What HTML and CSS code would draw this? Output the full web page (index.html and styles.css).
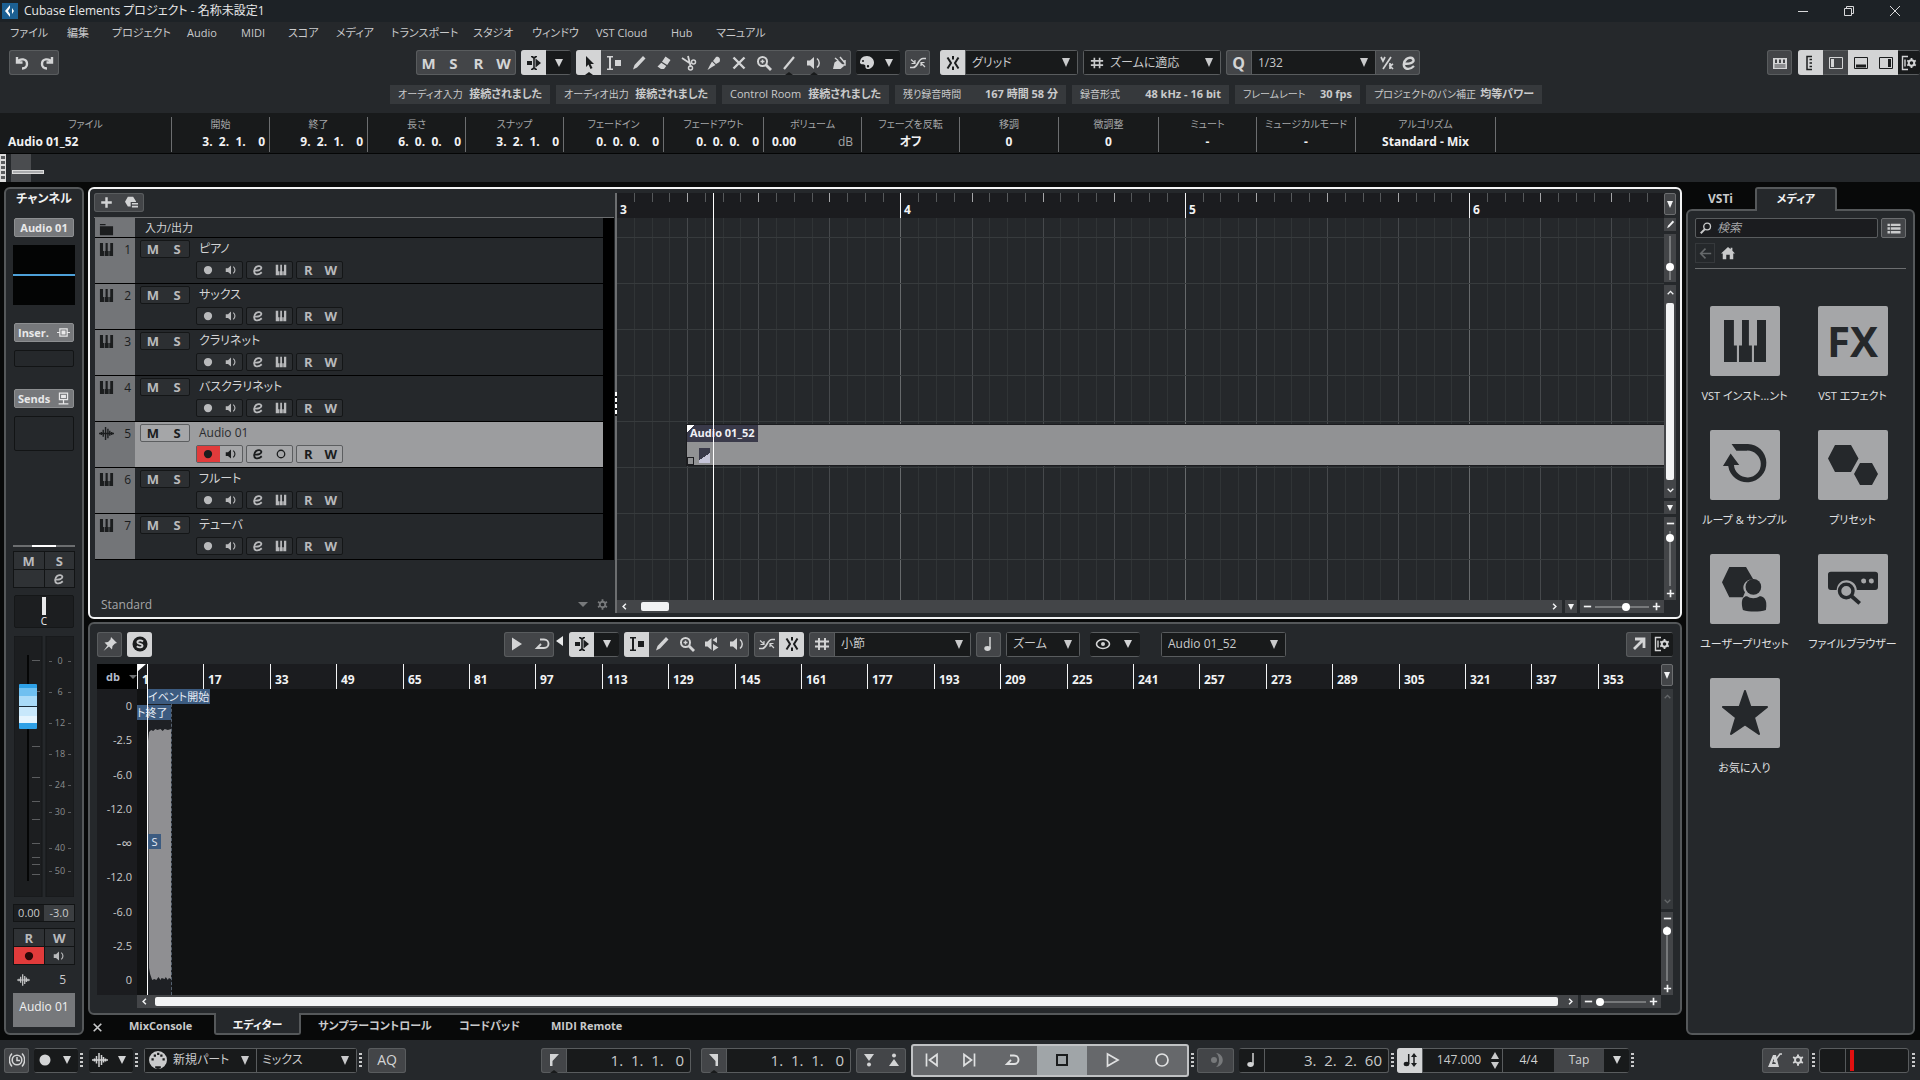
FILE: index.html
```
<!DOCTYPE html>
<html lang="ja">
<head>
  <meta charset="utf-8">
  <title>Cubase Elements プロジェクト - 名称未設定1</title>
  <link rel="stylesheet" href="styles.css">
</head>
<body>

  <!-- icon sprite -->
  <svg class="sprite" aria-hidden="true">
    <symbol id="undo" viewBox="0 0 16 16"><path d="M3 2v5.500h5.500M3.500 7C6 3 13 3.500 13 9c0 3-2 4.500-5 4.500" fill="none" stroke="currentColor" stroke-width="2.400"/></symbol>
    <symbol id="redo" viewBox="0 0 16 16"><path d="M13 2v5.500H7.500M12.500 7C10 3 3 3.500 3 9c0 3 2 4.500 5 4.500" fill="none" stroke="currentColor" stroke-width="2.400"/></symbol>
    <symbol id="scroll" viewBox="0 0 16 16"><path d="M1 6h5v4H1zM9.500 3.500 15 8l-5.500 4.500zM5 1h2l1 1 1-1h2v1L8.800 3.500v9L11 14v1H9l-1-1-1 1H5v-1l2.200-1.500v-9L5 2z"/></symbol>
    <symbol id="arrow" viewBox="0 0 16 16"><path d="M5 1v11l2.500-2.500L9.500 14l2-1-2-4H13z"/></symbol>
    <symbol id="range" viewBox="0 0 16 16"><path d="M1 1h6v1.500H5v11h2V15H1v-1.500h2v-11H1zM9 5h6v6H9z"/></symbol>
    <symbol id="pencil" viewBox="0 0 16 16"><path d="M12 1l2.500 2.500L6 12.500 2 14.500 3.500 10z"/></symbol>
    <symbol id="eraser" viewBox="0 0 16 16"><path d="M9.500 1.500 14.500 5l-3.300 5L6 6.700zM5.300 7.700l5 3.300L8 14H5L1.500 11.500z"/></symbol>
    <symbol id="scissors" viewBox="0 0 16 16"><path d="M1 3l9 6M7 1l2 8 1 3" fill="none" stroke="currentColor" stroke-width="1.800"/><circle cx="12.500" cy="7" r="2" fill="none" stroke="currentColor" stroke-width="1.500"/><circle cx="9.500" cy="13" r="2" fill="none" stroke="currentColor" stroke-width="1.500"/></symbol>
    <symbol id="glue" viewBox="0 0 16 16"><path d="M10 2c3-1 5 2 3.500 5L10 9 7 6zM6 6.500 9.500 10 6 12 1.500 15 4 10z"/></symbol>
    <symbol id="cross" viewBox="0 0 16 16"><path d="M2.500 2.500l11 11M13.500 2.500l-11 11" stroke="currentColor" stroke-width="2.400"/></symbol>
    <symbol id="zoom" viewBox="0 0 16 16"><circle cx="6.500" cy="6.500" r="4.500" fill="none" stroke="currentColor" stroke-width="2"/><path d="M10 10l5 5" stroke="currentColor" stroke-width="2.800"/><path d="M4.500 6.500h4M6.500 4.500v4" stroke="currentColor" stroke-width="1.500"/></symbol>
    <symbol id="line" viewBox="0 0 16 16"><path d="M13 2 3 14" stroke="currentColor" stroke-width="2.200"/></symbol>
    <symbol id="speaker" viewBox="0 0 16 16"><path d="M1 5.500h3L8 2v12l-4-3.500H1z"/><path d="M11 3.500c3 2.500 3 6.500 0 9" fill="none" stroke="currentColor" stroke-width="1.500"/></symbol>
    <symbol id="scrub" viewBox="0 0 16 16"><path d="M1 5.500h2.500L7.500 2v12l-4-3.500H1zM13 1v6L8.500 4zM9 8l5.500 3.500L9 15z"/></symbol>
    <symbol id="bucket" viewBox="0 0 16 16"><path d="M2 14l1.500-6.500L7 5l6 6-3.500 3z"/><path d="M4 3l3 2.500M9 2l5 6M14 5v5H9" stroke="currentColor" stroke-width="1.500" fill="none"/></symbol>
    <symbol id="palette" viewBox="0 0 16 16"><path fill-rule="evenodd" d="M8 1C3 1 1 4 1 8c1 2 4 1 5 2s-.5 3 2 4c4 .5 7-3 7-6.500S12 1 8 1zM4 7a1 1 0 1 1 0-2 1 1 0 0 1 0 2zm5 5.500a1.200 1.200 0 1 1 0-2.400 1.200 1.200 0 0 1 0 2.400z"/></symbol>
    <symbol id="fade" viewBox="0 0 16 16"><path d="M0 12.500h3C8 12.500 8 3.500 13 3.500h3" fill="none" stroke="currentColor" stroke-width="1.700"/><path d="M1 4.500 5 8M5 5v3.500H1.500M15 12l-4-4M11 11V7.500h3.500" fill="none" stroke="currentColor" stroke-width="1.200"/></symbol>
    <symbol id="snap" viewBox="0 0 16 16"><path d="M8 1v3.500M8 11.500V15M2.500 2.500 6 8l-3.500 5.500M13.500 2.500 10 8l3.500 5.500" fill="none" stroke="currentColor" stroke-width="2"/></symbol>
    <symbol id="hash" viewBox="0 0 16 16"><path d="M5 2v12M11 2v12M1 5.500h14M1 10.500h14" stroke="currentColor" stroke-width="1.900"/></symbol>
    <symbol id="swing" viewBox="0 0 16 16"><path d="M12 2 4 14M2 2l2 4 2-4M14 9l-3 2 3 3M11 8v6" fill="none" stroke="currentColor" stroke-width="1.700"/></symbol>
    <symbol id="edit" viewBox="0 0 16 16"><path d="M3 8.500c5 1 10-1 9.500-3.500C12 2.500 8 2 5.500 4 2 7 2 12 5 13.500c3 1 6-.5 8-2.500" fill="none" stroke="currentColor" stroke-width="2.400"/></symbol>
    <symbol id="keys" viewBox="0 0 16 16"><path d="M1 1h3.300v8.500h1V15H1zM7 1h2.300v8.500h1V15H6v-5.500h1zM12 1h3v14h-4V9.500h1z"/></symbol>
    <symbol id="folder" viewBox="0 0 16 16"><path d="M1 2h6v1.500H1zM1 4.500h14V14H1z"/></symbol>
    <symbol id="wave" viewBox="0 0 16 16"><path d="M0 8h16M2.500 6.500v3M4.500 4v7.500M7 1v14M9.500 3v10M11.500 5v5.500M13.500 6.500v3" stroke="currentColor" stroke-width="1.500"/></symbol>
    <symbol id="dot" viewBox="0 0 16 16"><circle cx="8" cy="8" r="5.500"/></symbol>
    <symbol id="ring" viewBox="0 0 16 16"><circle cx="8" cy="8" r="5" fill="none" stroke="currentColor" stroke-width="1.700"/></symbol>
    <symbol id="plus" viewBox="0 0 16 16"><path d="M8 1.500v13M1.500 8h13" stroke="currentColor" stroke-width="3"/></symbol>
    <symbol id="minus" viewBox="0 0 16 16"><path d="M1.500 8h13" stroke="currentColor" stroke-width="3"/></symbol>
    <symbol id="preset" viewBox="0 0 16 16"><path d="M3.500 1h6.500l3.500 5.500v1H7V13H3.500L0 7zM8.500 8.500H16v2H8.500zM8.500 12H16v2H8.500z"/></symbol>
    <symbol id="gear" viewBox="0 0 16 16"><circle cx="8" cy="8" r="4" fill="none" stroke="currentColor" stroke-width="2.600"/><path d="M8 .500v3M8 12.500v3M1.500 4.200l2.600 1.500M11.900 10.300l2.600 1.500M1.500 11.800l2.600-1.500M11.900 5.700l2.600-1.500" stroke="currentColor" stroke-width="2.600"/></symbol>
    <symbol id="setup" viewBox="0 0 16 16"><path d="M7 14.500H1.500v-13H7M4 4.500v7" fill="none" stroke="currentColor" stroke-width="1.400"/><circle cx="10.500" cy="8" r="2.800" fill="none" stroke="currentColor" stroke-width="2"/><path d="M10.500 3v2M10.500 11v2M6.200 5.500l1.700 1M13.100 9.500l1.700 1M6.200 10.500l1.700-1M13.100 6.500l1.700-1" stroke="currentColor" stroke-width="1.800"/></symbol>
    <symbol id="mixer" viewBox="0 0 16 16"><path fill-rule="evenodd" d="M1 3h14v11H1zM3 4.500V8h2V4.500zm4 0V8h2V4.500zm4 0V8h2V4.500zM2.500 9.500v1h11v-1zm0 2v1h11v-1z"/></symbol>
    <symbol id="zone-in" viewBox="0 0 16 16"><path d="M9 1.500H4v13h5M6.500 4.500H9M6.500 8H9M6.500 11.500H9" fill="none" stroke="currentColor" stroke-width="1.500"/></symbol>
    <symbol id="zone-left" viewBox="0 0 16 16"><path d="M1.500 2.500h13v11h-13z" fill="none" stroke="currentColor"/><path d="M3 4h3v8H3z"/></symbol>
    <symbol id="zone-low" viewBox="0 0 16 16"><path d="M1.500 2.500h13v11h-13z" fill="none" stroke="currentColor"/><path d="M3 9.500h10v3H3z"/></symbol>
    <symbol id="zone-right" viewBox="0 0 16 16"><path d="M1.500 2.500h13v11h-13z" fill="none" stroke="currentColor"/><path d="M10 4h3v8h-3z"/></symbol>
    <symbol id="pin" viewBox="0 0 16 16"><path d="M9 1l6 6-2 .5-2.500 2.500-.5 3.500-3-3L1.500 15 5.500 9.500 2.500 6.500 6 6l2.500-2.500z"/></symbol>
    <symbol id="solo" viewBox="0 0 16 16"><circle cx="8" cy="8" r="7.500"/><path d="M11 5.500C8.500 3.500 5 4.500 5.500 6.500 6 8.200 10.500 7.500 10.500 9.700c0 2-3.500 2.300-5.700.6" fill="none" stroke="#d3d4d5" stroke-width="1.900"/></symbol>
    <symbol id="play" viewBox="0 0 16 16"><path d="M3 1.500 13 8 3 14.500z"/></symbol>
    <symbol id="loop" viewBox="0 0 16 16"><path d="M6 3.500h4c6 0 6 8.500 0 8.500H3l4-4" fill="none" stroke="currentColor" stroke-width="1.900"/></symbol>
    <symbol id="note" viewBox="0 0 16 16"><ellipse cx="6.500" cy="12.500" rx="3.200" ry="2.400"/><path d="M9 12.500V1" stroke="currentColor" stroke-width="1.500"/></symbol>
    <symbol id="eye" viewBox="0 0 16 16"><ellipse cx="8" cy="8" rx="6.500" ry="4.500" fill="none" stroke="currentColor" stroke-width="1.600"/><circle cx="8" cy="8" r="2"/></symbol>
    <symbol id="popout" viewBox="0 0 16 16"><path d="M4 3h9v9M13 3 3 13" fill="none" stroke="currentColor" stroke-width="2.800"/></symbol>
    <symbol id="up" viewBox="0 0 16 16"><path d="M3 11l5-5 5 5" fill="none" stroke="currentColor" stroke-width="2.400"/></symbol>
    <symbol id="down" viewBox="0 0 16 16"><path d="M3 5l5 5 5-5" fill="none" stroke="currentColor" stroke-width="2.400"/></symbol>
    <symbol id="left" viewBox="0 0 16 16"><path d="M10.500 3l-5 5 5 5" fill="none" stroke="currentColor" stroke-width="2.600"/></symbol>
    <symbol id="right" viewBox="0 0 16 16"><path d="M5.500 3l5 5-5 5" fill="none" stroke="currentColor" stroke-width="2.600"/></symbol>
    <symbol id="search" viewBox="0 0 16 16"><circle cx="9.500" cy="6" r="4.500" fill="none" stroke="currentColor" stroke-width="1.800"/><path d="M6.500 9.500 1 15" stroke="currentColor" stroke-width="2.600"/></symbol>
    <symbol id="list" viewBox="0 0 16 16"><path d="M0 2h3v3H0zM4 2h12v3H4zM0 6.500h3v3H0zM4 6.500h12v3H4zM0 11h3v3H0zM4 11h12v3H4z"/></symbol>
    <symbol id="back" viewBox="0 0 16 16"><path d="M8 2 2 8l6 6M2 8h13" fill="none" stroke="currentColor" stroke-width="1.900"/></symbol>
    <symbol id="home" viewBox="0 0 16 16"><path d="M8 1 0 8.500h2V15h4v-5h4v5h4V8.500h2L13 5.500V2h-2v1.800z"/></symbol>
    <symbol id="clock" viewBox="0 0 16 16"><circle cx="8" cy="8" r="4.800" fill="none" stroke="currentColor" stroke-width="1.600"/><path d="M8 5v3.500h3M3 1.500C-.5 5-.5 11 3 14.500M13 1.500c3.500 3.500 3.500 9.500 0 13" fill="none" stroke="currentColor" stroke-width="1.500"/></symbol>
    <symbol id="midi" viewBox="0 0 16 16"><path fill-rule="evenodd" d="M8 0a8 8 0 1 0 0 16A8 8 0 0 0 8 0zM2.200 8.500h2v-2h-2zm2-3.500h2V3h-2zm3-1.500h2v-2h-2zM10 5h2V3h-2zm2 3.500h2v-2h-2zM5.500 16v-2.500h5V16z"/></symbol>
    <symbol id="flag-l" viewBox="0 0 16 16"><path d="M4 2h9L6.500 9v5H4z"/></symbol>
    <symbol id="flag-r" viewBox="0 0 16 16"><path d="M12 2H3l6.500 7v5H12z"/></symbol>
    <symbol id="punch-in" viewBox="0 0 16 16"><path d="M3 2h10l-5 7z"/><circle cx="8" cy="12.500" r="2"/></symbol>
    <symbol id="punch-out" viewBox="0 0 16 16"><path d="M3 14h10L8 7z"/><circle cx="8" cy="3.500" r="2"/></symbol>
    <symbol id="to-start" viewBox="0 0 16 16"><path d="M2.500 1.500v13M13 2.500v11L5.500 8z" fill="none" stroke="currentColor" stroke-width="1.700"/></symbol>
    <symbol id="to-end" viewBox="0 0 16 16"><path d="M13.500 1.500v13M3 2.500v11L10.500 8z" fill="none" stroke="currentColor" stroke-width="1.700"/></symbol>
    <symbol id="stop" viewBox="0 0 16 16"><path d="M3 3h10v10H3z" fill="none" stroke="currentColor" stroke-width="2"/></symbol>
    <symbol id="play-o" viewBox="0 0 16 16"><path d="M3.500 2v12L14 8z" fill="none" stroke="currentColor" stroke-width="1.700"/></symbol>
    <symbol id="rec-o" viewBox="0 0 16 16"><circle cx="8" cy="8" r="6" fill="none" stroke="currentColor" stroke-width="1.700"/></symbol>
    <symbol id="moon" viewBox="0 0 16 16"><circle cx="6" cy="8" r="3"/><path d="M8 1c9 1 9 13 0 14 4-3 4-11 0-14z"/></symbol>
    <symbol id="tempo" viewBox="0 0 16 16"><ellipse cx="4.500" cy="12" rx="2.800" ry="2.200"/><path d="M6.700 12V2M12 4v8" stroke="currentColor" stroke-width="1.500"/><path d="M9 5l3-4 3 4zM9 11l3 4 3-4z"/></symbol>
    <symbol id="click" viewBox="0 0 16 16"><path fill-rule="evenodd" d="M6 3h3l3 12H1zM6.500 7 5 12h4z"/><path d="M7 10l6-8h2" fill="none" stroke="currentColor" stroke-width="1.600"/></symbol>
    <symbol id="insert" viewBox="0 0 16 16"><path d="M3.500 3.500h9v9h-9zM0 8h3M13 8h3" fill="none" stroke="currentColor" stroke-width="1.500"/><path d="M5.500 5.500h5v5h-5z"/></symbol>
    <symbol id="send" viewBox="0 0 16 16"><path d="M3 1.500h10v8H3zM8 9v5M2 14.500h12" fill="none" stroke="currentColor" stroke-width="1.500"/><path d="M5 3.500h6v4H5z"/></symbol>
    <symbol id="t-loop" viewBox="0 0 48 48"><path d="M10 2h17a20 20 0 1 1-20.500 23H1l8-13 9 12h-5.500A14 14 0 1 0 26 9H15z"/></symbol>
    <symbol id="t-preset" viewBox="0 0 50 42"><path d="M7 1h16l7.500 13.500L23 28H7L0 14.500zM32 19h12l6 11-6 11H32l-6-11z"/></symbol>
    <symbol id="t-user" viewBox="0 0 44 44"><path d="M7 1h16l7 12c-8-1-12 7-8 12l-2 5H7L0 15.500z"/><circle cx="30" cy="20" r="7.500"/><path d="M20 42c-3-12 2-13 4-13 3 2.500 9 2.500 12 0 3 0 8 2 6 13-6 2-16 2-22 0z"/></symbol>
    <symbol id="t-file" viewBox="0 0 52 36"><path fill-rule="evenodd" d="M3 0h46q3 0 3 3v13q0 3-3 3H30C29 6 10 5 9 19H3q-3 0-3-3V3q0-3 3-3zM37 7a2.600 2.600 0 1 0 .1 5.200A2.600 2.600 0 0 0 37 7zm8 0a2.600 2.600 0 1 0 .1 5.200A2.600 2.600 0 0 0 45 7z"/><circle cx="19" cy="20" r="7" fill="none" stroke="currentColor" stroke-width="3.600"/><path d="M24 25l9 8" stroke="currentColor" stroke-width="4"/></symbol>
    <symbol id="t-star" viewBox="0 0 48 46"><path d="M24 1l5.500 16H46L33 27.500 38 44l-14-9.500L10 44l5-16.500L2 17h16.500z" stroke="currentColor" stroke-width="2" stroke-linejoin="round"/></symbol>
  </svg>

  <header class="top">
    <div class="titlebar">
      <svg class="logo" viewBox="0 0 16 16"><rect width="16" height="16" fill="#1c6093"/><path d="M8 2 3 8l5 6V11L6 8l2-3zM10 5l2 3-2 3z" fill="#fff"/></svg>
      <h1>Cubase Elements プロジェクト - 名称未設定1</h1>
      <div class="window-buttons">
        <button aria-label="最小化"><svg viewBox="0 0 12 12"><path d="M1 6.500h10"/></svg></button>
        <button aria-label="元に戻す"><svg viewBox="0 0 12 12"><path d="M1.500 3.500h7v7h-7zM3.500 3.500v-2h7v7h-2"/></svg></button>
        <button aria-label="閉じる"><svg viewBox="0 0 12 12"><path d="M1 1l10 10M11 1L1 11"/></svg></button>
      </div>
    </div>

    <nav class="menu">
      <a href="#">ファイル</a><a href="#">編集</a><a href="#">プロジェクト</a><a href="#">Audio</a><a href="#">MIDI</a><a href="#">スコア</a><a href="#">メディア</a><a href="#">トランスポート</a><a href="#">スタジオ</a><a href="#">ウィンドウ</a><a href="#">VST Cloud</a><a href="#">Hub</a><a href="#">マニュアル</a>
    </nav>

    <div class="toolbar">
      <div class="toolbar-left">
        <div class="group">
          <button><svg><use href="#undo"/></svg></button><button><svg><use href="#redo"/></svg></button>
        </div>
      </div>
      <div class="group letters"><button>M</button><button>S</button><button>R</button><button>W</button></div>
      <div class="group"><button class="on"><svg><use href="#scroll"/></svg></button><button class="dark"><i class="tri"></i></button></div>
      <div class="group">
        <button class="on notch"><svg><use href="#arrow"/></svg></button>
        <button><svg><use href="#range"/></svg></button>
        <button><svg><use href="#pencil"/></svg></button>
        <button><svg><use href="#eraser"/></svg></button>
        <button><svg><use href="#scissors"/></svg></button>
        <button><svg><use href="#glue"/></svg></button>
        <button><svg><use href="#cross"/></svg></button>
        <button><svg><use href="#zoom"/></svg></button>
        <button class="notch"><svg><use href="#line"/></svg></button>
        <button class="notch"><svg><use href="#speaker"/></svg></button>
        <button><svg><use href="#bucket"/></svg></button>
      </div>
      <div class="group narrow"><button class="dark"><svg><use href="#palette"/></svg></button><button class="dark"><i class="tri"></i></button></div>
      <div class="group"><button><svg><use href="#fade"/></svg></button></div>
      <div class="group snap-group">
        <button class="on"><svg><use href="#snap"/></svg></button>
        <div class="pick pick-grid"><select aria-label="スナップタイプ"><option>グリッド</option></select></div>
      </div>
      <div class="group"><div class="pick pick-zoom"><svg><use href="#hash"/></svg><select aria-label="グリッドタイプ"><option>ズームに適応</option></select></div></div>
      <div class="group">
        <button class="quant">Q</button>
        <div class="pick pick-quant"><select aria-label="クオンタイズ"><option>1/32</option></select></div>
        <button class="slim"><svg><use href="#swing"/></svg></button><button class="slim"><svg><use href="#edit"/></svg></button>
      </div>
      <div class="toolbar-right">
        <div class="group"><button><svg><use href="#mixer"/></svg></button></div>
        <div class="group">
          <button class="on"><svg><use href="#zone-in"/></svg></button>
          <button><svg><use href="#zone-left"/></svg></button>
          <button class="on"><svg><use href="#zone-low"/></svg></button>
          <button class="on"><svg><use href="#zone-right"/></svg></button>
          <button class="dark slim"><svg><use href="#setup"/></svg></button>
        </div>
      </div>
    </div>

    <div class="status">
      <div><span>オーディオ入力</span><b>接続されました</b></div>
      <div><span>オーディオ出力</span><b>接続されました</b></div>
      <div><span class="latin">Control Room</span><b>接続されました</b></div>
      <div><span>残り録音時間</span><b>167 時間 58 分</b></div>
      <div><span>録音形式</span><b>48 kHz - 16 bit</b></div>
      <div><span>フレームレート</span><b>30 fps</b></div>
      <div><span>プロジェクトのパン補正</span><b>均等パワー</b></div>
    </div>

    <dl class="infoline">
      <div class="name"><dt>ファイル</dt><dd>Audio 01_52</dd></div>
      <div class="pos"><dt>開始</dt><dd>3.  2.  1.    0</dd></div>
      <div class="pos"><dt>終了</dt><dd>9.  2.  1.    0</dd></div>
      <div class="pos"><dt>長さ</dt><dd>6.  0.  0.    0</dd></div>
      <div class="pos"><dt>スナップ</dt><dd>3.  2.  1.    0</dd></div>
      <div class="pos"><dt>フェードイン</dt><dd>0.  0.  0.    0</dd></div>
      <div class="pos"><dt>フェードアウト</dt><dd>0.  0.  0.    0</dd></div>
      <div class="vol"><dt>ボリューム</dt><dd>0.00 <span>dB</span></dd></div>
      <div><dt>フェーズを反転</dt><dd>オフ</dd></div>
      <div><dt>移調</dt><dd>0</dd></div>
      <div><dt>微調整</dt><dd>0</dd></div>
      <div><dt>ミュート</dt><dd>-</dd></div>
      <div><dt>ミュージカルモード</dt><dd>-</dd></div>
      <div><dt>アルゴリズム</dt><dd>Standard - Mix</dd></div>
    </dl>

    <div class="overview"><div class="overview-grip"></div><div class="overview-range"><i></i></div></div>
  </header>

  <main class="workspace">

    <aside class="channel">
      <h2>チャンネル</h2>
      <button class="rack">Audio 01</button>
      <div class="eq"></div>
      <button class="rack split inserts"><span>Inser.</span><svg><use href="#insert"/></svg></button>
      <div class="slot"></div>
      <button class="rack split sends"><span>Sends</span><svg><use href="#send"/></svg></button>
      <div class="slot tall"></div>
      <div class="splitter"></div>
      <div class="pads"><button>M</button><button>S</button><button aria-label="リッスン"></button><button><svg><use href="#edit"/></svg></button></div>
      <div class="pan"><i></i><span>C</span></div>
      <div class="fader">
        <svg viewBox="0 0 60 261">
          <path class="well" d="M0 0h28v261H0zM32 0h28v261H32z"/>
          <path d="M14 19v226" stroke="#050606" stroke-width="2"/>
          <path d="M18 24.500h8M18 55.500h8M18 110.500h8M18 141.500h8M18 165.500h8M18 183.500h8M18 207.500h8M18 221.500h8M18 228.500h8M18 238.500h8" stroke="#5b5d5f"/>
          <path d="M35 25.500h3M35 56.500h3M35 87.500h3M35 118.500h3M35 149.500h3M35 176.500h3M35 212.500h3M35 235.500h3M54 25.500h3M54 56.500h3M54 87.500h3M54 118.500h3M54 149.500h3M54 176.500h3M54 212.500h3M54 235.500h3" stroke="#5b5d5f"/>
          <g class="db-scale"><text x="46" y="28">0</text><text x="46" y="59">6</text><text x="46" y="90">12</text><text x="46" y="121">18</text><text x="46" y="152">24</text><text x="46" y="179">30</text><text x="46" y="215">40</text><text x="46" y="238">50</text></g>
        </svg>
        <input type="range" aria-label="ボリューム" value="78">
      </div>
      <div class="levels"><span>0.00</span><span>-3.0</span></div>
      <div class="pads"><button>R</button><button>W</button><button class="rec"><svg><use href="#dot"/></svg></button><button><svg><use href="#speaker"/></svg></button></div>
      <div class="channel-no"><svg><use href="#wave"/></svg><span>5</span></div>
      <div class="channel-name">Audio 01</div>
    </aside>

    <div class="center">
      <section class="project">
        <div class="tracks">
          <div class="tracks-head">
            <div class="group"><button><svg><use href="#plus"/></svg></button><button><svg><use href="#preset"/></svg></button></div>
          </div>
          <div class="tracks-body">
            <div class="track-list" id="tracks">
              <div class="track io"><div class="track-tag"><svg><use href="#folder"/></svg></div><div class="track-main">入力/出力</div></div>
            </div>
            <div class="track-meter"></div>
          </div>
          <div class="tracks-foot"><span>Standard</span><i class="tri"></i><svg><use href="#gear"/></svg></div>
        </div>

        <div class="arrange">
          <div class="ruler" id="bars"></div>
          <div class="lanes" id="lanes">
            <div class="clip"><span class="clip-name">Audio 01_52</span><i class="clip-fade"></i><i class="clip-handle"></i></div>
          </div>
          <div class="hbar">
            <div class="scrollbar"><svg><use href="#left"/></svg><i class="thumb"></i><svg class="end"><use href="#right"/></svg></div>
            <button class="mini"><i class="tri"></i></button>
            <div class="hzoom"><svg><use href="#minus"/></svg><input type="range" aria-label="横ズーム" value="58"><svg><use href="#plus"/></svg></div>
          </div>
          <i class="playhead"></i>
        </div>

        <div class="strip">
          <button class="strip-menu"><i class="tri"></i></button>
          <button class="mini"><svg><use href="#pencil"/></svg></button>
          <div class="vzoom short"><input type="range" aria-label="波形ズーム" value="76"></div>
          <div class="vscroll"><svg><use href="#up"/></svg><i></i><svg><use href="#down"/></svg></div>
          <button class="mini"><i class="tri"></i></button>
          <div class="vzoom"><svg><use href="#minus"/></svg><input type="range" aria-label="縦ズーム" value="6"><svg><use href="#plus"/></svg></div>
        </div>
      </section>

      <section class="editor">
        <div class="editor-bar">
          <div class="editor-left">
            <div class="group"><button><svg><use href="#pin"/></svg></button></div>
            <div class="group"><button class="on"><svg><use href="#solo"/></svg></button></div>
          </div>
          <div class="group audition"><button><svg><use href="#play"/></svg></button><button><svg><use href="#loop"/></svg></button></div>
          <i class="tri-left"></i>
          <div class="group"><button class="on"><svg><use href="#scroll"/></svg></button><button class="dark"><i class="tri"></i></button></div>
          <div class="group">
            <button class="on"><svg><use href="#range"/></svg></button>
            <button><svg><use href="#pencil"/></svg></button>
            <button><svg><use href="#zoom"/></svg></button>
            <button><svg><use href="#scrub"/></svg></button>
            <button><svg><use href="#speaker"/></svg></button>
          </div>
          <div class="group"><button><svg><use href="#fade"/></svg></button><button class="on"><svg><use href="#snap"/></svg></button></div>
          <div class="group"><button><svg><use href="#hash"/></svg></button><div class="pick pick-bar"><select aria-label="グリッド"><option>小節</option></select></div></div>
          <div class="group"><button><svg><use href="#note"/></svg></button></div>
          <div class="group"><div class="pick pick-fit"><select aria-label="ズーム"><option>ズーム</option></select></div></div>
          <div class="group view-group"><button class="dark"><svg><use href="#eye"/></svg></button><button class="dark"><i class="tri"></i></button></div>
          <div class="group part-group"><div class="pick pick-part"><select aria-label="クリップ"><option>Audio 01_52</option></select></div></div>
          <div class="group editor-right"><button><svg><use href="#popout"/></svg></button><button class="dark slim"><svg><use href="#setup"/></svg></button></div>
        </div>

        <div class="sample">
          <div class="scale">
            <div class="scale-head">db<i class="tri"></i></div>
            <div class="scale-body"><span>0</span><span>-2.5</span><span>-6.0</span><span>-12.0</span><span class="inf">-∞</span><span>-12.0</span><span>-6.0</span><span>-2.5</span><span>0</span></div>
          </div>
          <div class="sample-main">
            <div class="ruler" id="sample-bars"></div>
            <div class="sample-view">
              <div class="event">
                <svg viewBox="0 0 22 252" preserveAspectRatio="none"><path d="M0 12 1 3 3 1l2 1 2-2 2 1 3-1 2 2 2-2 3 1 3-1v250l-2-1-1 2-2-3-1 2-3-1-1 2-2-3-2 3-2-1-2 1-2-6-1-6z" fill="#8f8f92"/></svg>
              </div>
              <span class="mark mark-start">イベント開始</span>
              <span class="mark mark-end">ト終了</span>
              <span class="mark mark-snap">S</span>
            </div>
            <div class="hbar">
              <div class="scrollbar wide"><svg><use href="#left"/></svg><i class="thumb"></i><svg class="end"><use href="#right"/></svg></div>
              <div class="hzoom"><svg><use href="#minus"/></svg><input type="range" aria-label="横ズーム" value="0"><svg><use href="#plus"/></svg></div>
            </div>
            <i class="playhead"></i>
          </div>
          <div class="strip">
            <button class="strip-menu"><i class="tri"></i></button>
            <div class="vscroll idle"><svg><use href="#up"/></svg><svg><use href="#down"/></svg></div>
            <div class="vzoom"><svg><use href="#minus"/></svg><input type="range" aria-label="縦ズーム" value="2"><svg><use href="#plus"/></svg></div>
          </div>
        </div>
      </section>

      <nav class="lower-tabs">
        <button class="close" aria-label="閉じる"><svg><use href="#cross"/></svg></button>
        <a href="#">MixConsole</a>
        <a href="#" class="active">エディター</a>
        <a href="#">サンプラーコントロール</a>
        <a href="#">コードパッド</a>
        <a href="#">MIDI Remote</a>
      </nav>
    </div>

    <aside class="right">
      <nav class="right-tabs"><a href="#">VSTi</a><a href="#" class="active">メディア</a></nav>
      <div class="media">
        <div class="media-search">
          <label><svg><use href="#search"/></svg><input type="text" placeholder="検索"></label>
          <button aria-label="リスト"><svg><use href="#list"/></svg></button>
        </div>
        <div class="media-path"><button aria-label="戻る"><svg><use href="#back"/></svg></button><a href="#" aria-label="ホーム"><svg><use href="#home"/></svg></a></div>
        <div class="tiles">
          <a href="#"><i><svg class="t-keys"><use href="#keys"/></svg></i>VST インスト...ント</a>
          <a href="#"><i class="fx">FX</i>VST エフェクト</a>
          <a href="#"><i><svg><use href="#t-loop"/></svg></i>ループ &amp; サンプル</a>
          <a href="#"><i><svg><use href="#t-preset"/></svg></i>プリセット</a>
          <a href="#"><i><svg><use href="#t-user"/></svg></i>ユーザープリセット</a>
          <a href="#"><i><svg><use href="#t-file"/></svg></i>ファイルブラウザー</a>
          <a href="#"><i><svg><use href="#t-star"/></svg></i>お気に入り</a>
        </div>
      </div>
    </aside>
  </main>

  <footer class="transport">
    <div class="transport-left">
      <div class="group"><button><svg><use href="#clock"/></svg></button></div>
      <div class="group narrow"><button class="dark"><svg><use href="#dot"/></svg></button><button class="dark"><i class="tri"></i></button></div>
      <i class="dots"></i>
      <div class="group narrow"><button class="dark"><svg><use href="#wave"/></svg></button><button class="dark"><i class="tri"></i></button></div>
      <i class="dots"></i>
      <div class="group">
        <div class="pick pick-rec"><svg><use href="#midi"/></svg><select aria-label="MIDI録音モード"><option>新規パート</option></select></div>
        <div class="pick pick-mix"><select aria-label="サイクル録音"><option>ミックス</option></select></div>
      </div>
      <i class="dots"></i>
      <div class="group"><button class="aq">AQ</button></div>
    </div>
    <div class="group"><button class="notch"><svg><use href="#flag-l"/></svg></button><input class="field" aria-label="左ロケーター" value="1.  1.  1.   0"></div>
    <div class="group locator-r"><button class="notch"><svg><use href="#flag-r"/></svg></button><input class="field" aria-label="右ロケーター" value="1.  1.  1.   0"></div>
    <div class="group"><button><svg><use href="#punch-in"/></svg></button><button><svg><use href="#punch-out"/></svg></button></div>
    <div class="deck">
      <button><svg><use href="#to-start"/></svg></button>
      <button><svg><use href="#to-end"/></svg></button>
      <button class="wide"><svg><use href="#loop"/></svg></button>
      <button class="wide lit"><svg><use href="#stop"/></svg></button>
      <button class="wide"><svg><use href="#play-o"/></svg></button>
      <button class="wide"><svg><use href="#rec-o"/></svg></button>
    </div>
    <i class="dots"></i>
    <div class="group dim"><button><svg><use href="#moon"/></svg></button></div>
    <div class="group"><button class="dark"><svg><use href="#note"/></svg></button><input class="field" aria-label="現在位置" value="3.  2.  2.  60"></div>
    <i class="dots"></i>
    <div class="group">
      <button class="on"><svg><use href="#tempo"/></svg></button>
      <div class="tempo"><input aria-label="テンポ" value="147.000"><span><i class="tri-up"></i><i class="tri"></i></span></div>
      <button class="dark sig">4/4</button>
      <button class="tap">Tap</button>
      <button class="dark"><i class="tri"></i></button>
    </div>
    <i class="dots"></i>
    <div class="transport-right">
      <div class="group"><button><svg><use href="#click"/></svg></button><button class="slim"><svg class="small"><use href="#gear"/></svg></button></div>
      <i class="dots"></i>
      <div class="load"></div>
      <i class="dots"></i>
    </div>
  </footer>

  <script src="script.js"></script>
</body>
</html>
```

FILE: styles.css
```
* {
  box-sizing: border-box;
}

html, body {
  margin: 0;
  padding: 0;
}

body {
  display: flex;
  flex-direction: column;
  min-height: 100vh;
  background: #080909;
  color: #c9cacb;
  font-family: "Open Sans", "Noto Sans CJK JP", sans-serif;
  font-feature-settings: "palt";
  font-size: 12px;
  line-height: 16px;
}

button, input, select {
  font: inherit;
  font-feature-settings: inherit;
  color: inherit;
  margin: 0;
  padding: 0;
  border: 0;
  background: none;
}

a {
  color: inherit;
  text-decoration: none;
}

svg {
  display: block;
  width: 16px;
  height: 16px;
  flex: none;
  fill: currentColor;
}

svg.small {
  width: 12px;
  height: 12px;
}

.sprite {
  position: absolute;
  width: 0;
  height: 0;
}

/* small triangles */
.tri {
  border: 4px solid transparent;
  border-top: 8px solid currentColor;
  border-bottom: 0;
}

.tri-up {
  border: 4px solid transparent;
  border-bottom: 7px solid currentColor;
  border-top: 0;
}

.tri-left {
  border: 5px solid transparent;
  border-right: 7px solid #e8e9ea;
  border-left: 0;
  margin: 0 1px 6px 2px;
}

/* title + menu */
.top {
  background: #25282b;
}

.titlebar {
  display: flex;
  align-items: center;
  height: 22px;
  padding-left: 2px;
  background: #1d2226;
}

.titlebar h1 {
  margin: 0 0 0 6px;
  flex: 1;
  font-size: 12px;
  font-weight: normal;
  color: #e6e7e8;
}

.window-buttons {
  display: flex;
  padding-right: 2px;
}

.window-buttons button {
  width: 46px;
  height: 18px;
  display: grid;
  place-items: center;
}

.window-buttons svg {
  width: 12px;
  height: 12px;
  fill: none;
  stroke: #d8d9da;
}

.menu {
  display: grid;
  grid-template-columns: 57px 45px 75px 54px 47px 48px 55px 82px 59px 64px 75px 45px auto;
  justify-content: start;
  height: 22px;
  align-items: center;
  padding-left: 10px;
  font-size: 11px;
  white-space: nowrap;
}

/* toolbar */
.toolbar {
  display: flex;
  gap: 5px;
  padding: 6px 0 6px 9px;
}

.toolbar-left {
  display: flex;
  width: 402px;
}

.toolbar-right {
  display: flex;
  gap: 6px;
  margin-left: auto;
}

.group {
  display: flex;
  height: 25px;
  border-radius: 3px;
  background: #434548;
  box-shadow: inset 0 0 0 1px #595c5e;
  overflow: hidden;
}

.group button {
  position: relative;
  min-width: 25px;
  height: 25px;
  display: grid;
  place-items: center;
  color: #d3d4d5;
}

.group .on {
  background: #d3d4d5;
  color: #1b1d1e;
}

.group .dark {
  background: #181a1b;
  box-shadow: inset 0 1px #595c5e, inset 0 -1px #595c5e;
}

.group .slim {
  min-width: 22px;
}

.group.narrow button {
  min-width: 22px;
}

.notch::after {
  content: "";
  position: absolute;
  left: 9px;
  bottom: 0;
  border: 4px solid transparent;
  border-bottom: 3px solid #181a1b;
  border-top: 0;
}

.letters button {
  font-size: 15px;
  font-weight: bold;
}

.group .quant {
  font-size: 16px;
  font-weight: bold;
}

.snap-group {
  margin-left: 5px;
}

.pick {
  display: flex;
  align-items: center;
  gap: 6px;
  padding: 0 7px 0 6px;
  background: #181a1b;
  border: 1px solid #595c5e;
}

.pick::after {
  content: "";
  border: 4px solid transparent;
  border-top: 9px solid currentColor;
  border-bottom: 0;
}

.pick select {
  appearance: none;
  flex: 1;
  min-width: 0;
  font-size: 12px;
  outline: 0;
}

.pick svg {
  width: 14px;
  height: 14px;
}

.pick-grid { width: 113px; }
.pick-zoom { width: 138px; }
.pick-quant { width: 125px; }
.pick-bar { width: 137px; }
.pick-fit { width: 74px; }
.pick-part { width: 125px; }
.pick-rec { width: 113px; padding: 0 7px 0 4px; }
.pick-mix { width: 101px; margin-left: -1px; padding-left: 5px; }

.pick-rec svg {
  width: 18px;
  height: 18px;
}

/* status line */
.status {
  display: grid;
  grid-template-columns: 160px 160px 167px 171px 157px 125px 176px;
  gap: 6px;
  margin-left: 390px;
  padding: 4px 0 9px;
}

.status div {
  display: flex;
  justify-content: space-between;
  height: 19px;
  padding: 1px 8px;
  background: #36393c;
  font-size: 11px;
  white-space: nowrap;
}

.status span {
  font-size: 10px;
}

.status .latin {
  font-size: 11px;
}

/* info line */
.infoline {
  display: grid;
  grid-template-columns: 172px 98px 98px 98px 98px 100px 100px 98px 98px 99px 100px 98px 99px 140px;
  height: 40px;
  margin: 0;
  padding: 4px 0 1px;
  background: #181a1b;
  white-space: nowrap;
}

.infoline div {
  border-right: 1px solid #6c6e70;
  text-align: center;
  padding: 0 4px;
}

.infoline dt {
  font-size: 10px;
  line-height: 15px;
  color: #a5a6a8;
}

.infoline dd {
  margin: 0;
  line-height: 20px;
  font-weight: bold;
  color: #f2f2f3;
  white-space: pre;
}

.infoline .name dd {
  text-align: left;
  padding-left: 4px;
}

.infoline .pos dd {
  text-align: right;
}

.infoline .vol dd {
  display: flex;
  justify-content: space-between;
  padding: 0 4px;
}

.infoline .vol span {
  color: #a5a6a8;
  font-weight: normal;
}

.overview {
  display: flex;
  gap: 5px;
  height: 29px;
  border-top: 1px solid #050606;
}

.overview-grip {
  width: 6px;
  background: repeating-linear-gradient(#dcdcdc 0 1px, #5a5c5e 1px 4px, #dcdcdc 4px 5px);
  border: 1px solid #dcdcdc;
}

.overview-range {
  width: 20px;
  padding: 16px 0 0 1px;
  background: #4a4c4f;
}

.overview-range i {
  display: block;
  width: 32px;
  height: 4px;
  background: #a9aaac;
  border: 1px solid #dcdcdc;
}

/* workspace */
.workspace {
  flex: 1;
  display: grid;
  grid-template-columns: 80px minmax(0, 1fr) 229px;
  gap: 4px;
  padding: 5px 5px 5px 4px;
}

.channel {
  display: flex;
  flex-direction: column;
  padding: 0 7px 6px;
  background: #25282b;
  border: 2px solid #55585a;
  border-radius: 6px;
}

.channel h2 {
  margin: 2px 0 11px;
  font-size: 12px;
  text-align: center;
  color: #f0f0f1;
}

.rack {
  flex: none;
  height: 19px;
  margin: 0 1px;
  background: #76787b;
  border: 1px solid #8d8f91;
  border-radius: 2px;
  font-weight: bold;
  font-size: 11px;
  line-height: 16px;
  color: #e8e8e9;
}

.rack.split {
  display: flex;
  align-items: center;
  justify-content: space-between;
  padding: 0 3px;
}

.rack svg {
  width: 13px;
  height: 13px;
}

.eq {
  height: 60px;
  margin: 8px 0 18px;
  background: linear-gradient(#4da0d8, #4da0d8) 0 50% / 100% 2px no-repeat, #030404;
}

.slot {
  height: 17px;
  margin: 8px 1px 22px;
  border: 1px solid #121415;
  border-radius: 2px;
}

.slot.tall {
  height: 35px;
  margin-bottom: auto;
}

.splitter {
  height: 2px;
  margin-bottom: 4px;
  background: linear-gradient(90deg, #6c6e70 30%, #fff 30% 70%, #6c6e70 70%);
}

.pads {
  display: grid;
  grid-template-columns: 1fr 1fr;
  grid-auto-rows: 17px;
  gap: 1px;
  padding: 1px;
  background: #121415;
}

.pads button {
  display: grid;
  place-items: center;
  background: #2f3235;
  font-weight: bold;
  font-size: 13px;
  color: #b9babc;
}

.pads svg {
  width: 12px;
  height: 12px;
}

.pads .rec {
  background: #e13b3b;
  color: #2a0808;
}

.pan {
  display: flex;
  flex-direction: column;
  align-items: center;
  height: 33px;
  margin: 7px 1px 8px;
  background: #1c1e20;
  border: 1px solid #151718;
  border-radius: 2px;
  font-size: 10px;
  line-height: 12px;
  color: #f0f0f1;
}

.pan i {
  width: 4px;
  height: 18px;
  margin-top: 1px;
  background: #e8e8e9;
}

.fader {
  position: relative;
  height: 261px;
  margin: 0 1px;
}

.fader svg {
  width: 60px;
  height: 261px;
}

.well {
  fill: #1c1e20;
  stroke: #151718;
}

.db-scale {
  font-size: 9px;
  text-anchor: middle;
  fill: #8b8d8f;
}

.fader input {
  position: absolute;
  left: 0;
  top: 0;
  width: 28px;
  height: 261px;
  direction: rtl;
}

.levels {
  display: flex;
  margin: 7px 0 6px;
  border: 1px solid #121415;
  font-size: 11px;
  text-align: center;
}

.levels span {
  flex: 1;
  background: #1c1e20;
}

.levels span + span {
  background: #3b3e41;
}

.channel-no {
  display: flex;
  justify-content: space-between;
  padding: 7px 9px 5px 4px;
}

.channel-no svg {
  width: 13px;
}

.channel-name {
  height: 34px;
  padding-top: 6px;
  background: #76787b;
  font-size: 12px;
  text-align: center;
  color: #f0f0f1;
}

/* sliders */
input[type="range"] {
  appearance: none;
  min-width: 0;
  min-height: 0;
}

input[type="range"]::-webkit-slider-runnable-track {
  block-size: 2px;
  background: #77797b;
}

input[type="range"]::-webkit-slider-thumb {
  appearance: none;
  width: 8px;
  height: 8px;
  margin-block-start: -3px;
  border-radius: 50%;
  background: #fff;
}

.vzoom input, .fader input {
  writing-mode: vertical-lr;
}

.fader input::-webkit-slider-runnable-track {
  block-size: 18px;
  background: none;
}

.fader input::-webkit-slider-thumb {
  width: 18px;
  height: 45px;
  margin-block-start: 0;
  border-radius: 1px;
  background: linear-gradient(#2ea0e6 0 4px, #6fc0f0 4px 12px, #a9dbf8 12px 22px, #1b2d3a 22px 23px, #c8e8fb 23px 32px, #e6f5fe 32px 39px, #2ea0e6 39px);
}

/* project window */
.center {
  display: flex;
  flex-direction: column;
  min-width: 0;
}

.project {
  display: grid;
  grid-template-columns: 521px minmax(0, 1fr) 12px;
  padding: 4px;
  background: #25282b;
  border: 2px solid #f2f3f4;
  border-radius: 6px;
}

.tracks {
  display: flex;
  flex-direction: column;
  margin-right: 1px;
}

.tracks-head {
  height: 25px;
  border-bottom: 1px solid #6c6e70;
}

.tracks-head .group,
.tracks-head .group button {
  height: 19px;
}

.tracks-head .group {
  display: inline-flex;
}

.tracks-head svg {
  width: 13px;
  height: 13px;
}

.tracks-body {
  display: flex;
}

.track-list {
  flex: 1;
  padding-left: 1px;
}

.track-meter {
  width: 11px;
  background: #000;
}

.track {
  display: flex;
  height: 46px;
  border-bottom: 1px solid #000;
  color: #d3d4d5;
}

.track.io {
  height: 20px;
}

.io .track-main {
  padding: 2px 10px;
  font-size: 11px;
}

.track-tag {
  display: flex;
  justify-content: space-between;
  width: 40px;
  padding: 4px 4px 0;
  background: #737578;
  color: #1b1d1e;
}

.track-tag svg {
  width: 15px;
  height: 15px;
}

.track-main {
  flex: 1;
}

.track-row {
  display: flex;
  align-items: center;
  gap: 3px;
  padding: 2px 0 0 5px;
  font-size: 12px;
  line-height: 18px;
}

.track-row + .track-row {
  padding: 3px 0 0 61px;
}

.track-row .label {
  margin-left: 6px;
}

.pair {
  display: flex;
  width: 47px;
  height: 18px;
  border: 1px solid #141617;
  border-radius: 2px;
  background: #2c2f32;
}

.pair.ms {
  width: 50px;
}

.pair button {
  flex: 1;
  display: grid;
  place-items: center;
  font-weight: bold;
  font-size: 13px;
  line-height: 16px;
  color: #b9babc;
}

.pair svg {
  width: 12px;
  height: 12px;
}

.track.selected .track-main {
  background: #9c9d9f;
  color: #2a2c2e;
}

.selected .pair {
  background: #a5a6a8;
  border-color: #5c5e60;
}

.selected .pair button {
  color: #1b1d1e;
}

.selected .pair .armed {
  background: #e13b3b;
}

.tracks-foot {
  flex: 1;
  min-height: 53px;
  display: flex;
  align-items: flex-end;
  gap: 9px;
  padding: 0 6px 0 7px;
  color: #a5a6a8;
}

.tracks-foot .tri {
  margin: 0 0 6px auto;
  border-width: 5px 5px 0;
  color: #77797b;
}

.tracks-foot svg {
  width: 11px;
  height: 11px;
  margin-bottom: 3px;
  color: #77797b;
}

.arrange {
  position: relative;
  display: flex;
  flex-direction: column;
  border-left: 2px solid #6c6e70;
}

.arrange::before {
  content: "";
  position: absolute;
  left: -2px;
  top: 199px;
  width: 2px;
  height: 24px;
  background: repeating-linear-gradient(#fff 0 4px, #111 4px 6px);
}

.ruler {
  position: relative;
  height: 25px;
  background: #1b1c1f;
  overflow: hidden;
}

.ruler i {
  position: absolute;
  top: 0;
  width: 1px;
  height: 9px;
  background: #55585a;
}

.ruler i.beat {
  background: #a5a6a8;
}

.ruler i.bar {
  height: 25px;
  background: #f2f3f4;
}

.ruler span {
  position: absolute;
  bottom: 0;
  padding-left: 4px;
  font-weight: bold;
  color: #f2f3f4;
}

.lanes {
  position: relative;
  flex: 1;
  overflow: hidden;
}

.lanes .v, .lanes .h {
  position: absolute;
  background: #303436;
}

.lanes .v {
  top: 0;
  bottom: 0;
  width: 1px;
}

.lanes .h {
  left: 0;
  right: 0;
  height: 1px;
  background: #373b3d;
}

.lanes .v.beat {
  background: #46494c;
}

.lanes .v.bar {
  background: #66696b;
}

.clip {
  position: absolute;
  z-index: 1;
  left: 69px;
  right: 0;
  top: 206px;
  height: 42px;
  background: #919294;
  border: 1px solid #1b1c1f;
  border-right: 0;
}

.clip-name {
  display: block;
  width: 71px;
  height: 17px;
  padding-left: 3px;
  background: linear-gradient(135deg, #fff 5px, transparent 5px), #3a3a4a;
  font-size: 11px;
  font-weight: bold;
  color: #f0f0f5;
  white-space: nowrap;
}

.clip-fade {
  position: absolute;
  left: 12px;
  bottom: 2px;
  width: 11px;
  height: 15px;
  background: linear-gradient(145deg, #3a3a4a 55%, #c5c4d8 55%);
}

.clip-handle {
  position: absolute;
  left: 0;
  bottom: 0;
  width: 7px;
  height: 8px;
  border: 1px solid #1b1c1f;
}

.playhead {
  position: absolute;
  z-index: 2;
  top: 0;
  bottom: 13px;
  left: 96px;
  width: 1px;
  background: #fff;
}

.hbar {
  display: flex;
  gap: 3px;
  height: 13px;
  color: #f2f3f4;
}

.scrollbar {
  flex: 1;
  display: flex;
  align-items: center;
  padding: 0 3px;
  background: #434548;
}

.hbar svg, .strip svg {
  width: 9px;
  height: 9px;
}

.scrollbar .thumb {
  width: 28px;
  height: 9px;
  margin-left: 12px;
  border-radius: 2px;
  background: #f2f3f4;
}

.scrollbar.wide .thumb {
  flex: 1;
  margin: 0 8px 0 6px;
}

.scrollbar .end {
  margin-left: auto;
}

.hzoom {
  display: flex;
  align-items: center;
  gap: 3px;
  width: 84px;
  padding: 0 3px;
  background: #434548;
}

.hzoom input {
  flex: 1;
}

.mini {
  display: grid;
  place-items: center;
  width: 12px;
  height: 13px;
  flex: none;
  background: #434548;
  color: #f2f3f4;
}

.mini .tri {
  border-width: 6px 3px 0;
}

.strip {
  display: flex;
  flex-direction: column;
  gap: 3px;
  padding-bottom: 13px;
  color: #f2f3f4;
}

.strip-menu {
  display: grid;
  place-items: center;
  height: 22px;
  border: 1px solid #6c6e70;
  border-radius: 2px;
  background: #434548;
}

.strip-menu .tri {
  border-width: 7px 3px 0;
}

.vzoom {
  display: flex;
  flex-direction: column;
  align-items: center;
  gap: 3px;
  width: 12px;
  height: 83px;
  padding: 2px 0;
  background: #434548;
}

.vzoom.short {
  height: 48px;
}

.vzoom input {
  flex: 1;
  width: 12px;
}

.vscroll {
  flex: 1;
  display: flex;
  flex-direction: column;
  align-items: center;
  justify-content: space-between;
  gap: 6px;
  width: 12px;
  padding: 3px 0;
  background: #434548;
}

.vscroll i {
  flex: 1;
  width: 8px;
  border-radius: 2px;
  background: #f2f3f4;
}

.vscroll.idle {
  background: #36393c;
  color: #66696b;
}

/* sample editor */
.editor {
  flex: 1;
  display: flex;
  flex-direction: column;
  margin-top: 3px;
  padding: 0 7px 5px;
  background: #25282b;
  border: 2px solid #55585a;
  border-radius: 6px;
}

.editor-bar {
  display: flex;
  align-items: center;
  gap: 5px;
  height: 40px;
}

.editor-left {
  display: flex;
  gap: 5px;
  width: 402px;
}

.audition {
  margin-right: -5px;
}

.view-group {
  margin-left: 5px;
}

.part-group {
  margin-left: 16px;
}

.editor-right {
  margin-left: auto;
}

.sample {
  flex: 1;
  display: grid;
  grid-template-columns: 40px minmax(0, 1fr) 12px;
}

.scale {
  display: flex;
  flex-direction: column;
  margin-bottom: 13px;
  background: #1b1c1f;
}

.scale-head {
  display: flex;
  align-items: center;
  justify-content: flex-end;
  gap: 9px;
  height: 25px;
  background: #000;
  font-size: 11px;
  font-weight: bold;
  color: #b3bccb;
}

.scale-head .tri {
  border-width: 4px 4px 0;
  color: #6c6e70;
}

.scale-body {
  flex: 1;
  display: flex;
  flex-direction: column;
  justify-content: space-between;
  padding: 9px 5px 7px 0;
  font-size: 11px;
  text-align: right;
}

.scale-body .inf {
  font-size: 15px;
}

.sample-main {
  position: relative;
  display: flex;
  flex-direction: column;
}

.sample-main .playhead {
  left: 10px;
}

.sample-main .hzoom {
  width: 80px;
}

.sample-main .ruler span {
  bottom: 1px;
  padding-left: 5px;
}

#sample-bars::before {
  content: "";
  position: absolute;
  left: 0;
  top: 0;
  border-top: 8px solid #fff;
  border-right: 9px solid transparent;
}

.sample-view {
  position: relative;
  flex: 1;
  background: #111213;
}

.event {
  position: absolute;
  left: 10px;
  top: 0;
  bottom: 0;
  width: 25px;
  padding: 40px 1px 14px;
  background: #1e2024;
  border-right: 1px dashed #55606e;
}

.event svg {
  width: 23px;
  height: 100%;
}

.mark {
  position: absolute;
  z-index: 1;
  left: 11px;
  height: 15px;
  background: #3c5b80;
  font-size: 11px;
  line-height: 15px;
  white-space: nowrap;
  color: #e6ecf4;
}

.mark-start {
  top: 0;
  width: 62px;
}

.mark-end {
  left: 0;
  top: 16px;
  width: 34px;
}

.mark-snap {
  top: 145px;
  width: 13px;
  text-align: center;
}

/* lower zone tabs */
.lower-tabs {
  display: grid;
  grid-template-columns: 24px 102px 87px 141px 92px auto;
  justify-content: start;
  height: 20px;
  line-height: 20px;
  font-size: 11px;
  font-weight: bold;
  white-space: nowrap;
}

.lower-tabs .close {
  padding: 3px 0 0 4px;
}

.lower-tabs .close svg {
  width: 11px;
  height: 11px;
}

.lower-tabs a {
  padding: 1px 0 0 17px;
}

.lower-tabs .active {
  position: relative;
  height: 22px;
  margin-top: -2px;
  padding: 3px 0 0;
  text-align: center;
  line-height: 18px;
  background: #25282b;
  border: 2px solid #55585a;
  border-top: 0;
  border-radius: 0 0 3px 3px;
  color: #f2f3f4;
}

/* media zone */
.right {
  display: flex;
  flex-direction: column;
}

.right-tabs {
  display: grid;
  grid-template-columns: 69px 82px;
  height: 22px;
  font-size: 12px;
  font-weight: bold;
  text-align: center;
  line-height: 23px;
}

.right-tabs .active {
  position: relative;
  height: 24px;
  background: #25282b;
  border: 2px solid #55585a;
  border-bottom: 0;
  border-radius: 3px 3px 0 0;
  color: #f2f3f4;
  font-size: 11px;
  line-height: 20px;
}

.media {
  flex: 1;
  padding: 7px;
  background: #25282b;
  border: 2px solid #55585a;
  border-radius: 6px;
}

.media-search {
  display: flex;
  gap: 3px;
}

.media-search label {
  flex: 1;
  display: flex;
  align-items: center;
  gap: 5px;
  height: 20px;
  padding: 0 4px;
  background: #1b1c1f;
  border: 1px solid #595c5e;
  border-radius: 2px;
}

.media-search label svg {
  width: 12px;
  height: 12px;
}

.media-search input {
  flex: 1;
  min-width: 0;
  font-size: 12px;
  font-style: italic;
}

.media-search input::placeholder {
  color: #a5a6a8;
}

.media-search button {
  display: grid;
  place-items: center;
  width: 25px;
  height: 20px;
  background: #434548;
  border: 1px solid #6c6e70;
  border-radius: 2px;
}

.media-search button svg {
  height: 13px;
}

.media-path {
  display: flex;
  align-items: center;
  gap: 6px;
  height: 31px;
  border-bottom: 1px solid #6c6e70;
}

.media-path button {
  display: grid;
  place-items: center;
  width: 20px;
  height: 20px;
  border: 1px solid #36393c;
  color: #66696b;
}

.media-path svg {
  width: 13px;
  height: 13px;
}

.media-path a svg {
  width: 14px;
  height: 14px;
}

.tiles {
  display: grid;
  grid-template-columns: 108px 108px;
  grid-auto-rows: 124px;
  justify-content: center;
  padding: 37px 4px 0 0;
  text-align: center;
  font-size: 11px;
  white-space: nowrap;
  color: #e0e1e2;
}

.tiles i {
  display: grid;
  place-items: center;
  width: 70px;
  height: 70px;
  margin: 0 auto 12px;
  background: #a5a6a8;
  border-radius: 2px;
  color: #25282b;
}

.tiles svg {
  width: 50px;
  height: 46px;
}

.tiles .t-keys {
  width: 48px;
  height: 48px;
}

.tiles .fx {
  font-size: 42px;
  font-style: normal;
  font-weight: bold;
}

/* transport */
.transport {
  display: flex;
  align-items: center;
  gap: 5px;
  height: 40px;
  padding: 0 4px;
  background: #25282b;
}

.transport-left {
  display: flex;
  align-items: center;
  gap: 5px;
  width: 532px;
}

.transport .dots {
  width: 3px;
  height: 14px;
  margin: 0 -2px 0 -3px;
  background: repeating-linear-gradient(#c9cacb 0 2px, transparent 2px 4px);
}

.transport-left .dots {
  margin-right: 1px;
}

.field {
  width: 125px;
  padding-right: 6px;
  background: #181a1b;
  border: 1px solid #595c5e;
  border-radius: 0 3px 3px 0;
  font-size: 15px;
  text-align: right;
}

.locator-r {
  margin-left: 5px;
}

.group .aq {
  width: 38px;
  font-size: 14px;
}

.deck {
  display: flex;
  height: 33px;
  border: 2px solid #c0c2c4;
  border-radius: 3px;
  background: #66686b;
}

.deck button {
  width: 37px;
  display: grid;
  place-items: center;
  color: #e0e1e2;
}

.deck .wide {
  width: 50px;
}

.deck .lit {
  background: #a0a5a8;
  color: #1b1d1e;
}

.dim button {
  width: 37px;
  color: #77797b;
}

.tempo {
  display: flex;
  align-items: center;
  width: 81px;
  padding: 0 3px 0 4px;
  background: #181a1b;
  border: 1px solid #595c5e;
}

.tempo input {
  flex: 1;
  min-width: 0;
  text-align: center;
}

.tempo span {
  display: grid;
  gap: 3px;
}

.tempo .tri {
  border-top-width: 7px;
}

.group .sig {
  width: 51px;
}

.group .tap {
  width: 50px;
}

.transport-right {
  display: flex;
  align-items: center;
  gap: 6px;
  margin-left: auto;
  padding-right: 3px;
}

.load {
  width: 90px;
  height: 25px;
  border: 1px solid #595c5e;
  border-radius: 3px;
  background: linear-gradient(#55585a, #55585a) 25px 0 / 1px 100% no-repeat, linear-gradient(#e01010, #e01010) 30px 1px / 4px 21px no-repeat, #181a1b;
}
```

FILE: script.js
```
const tracks = [
  { name: 'ピアノ' },
  { name: 'サックス' },
  { name: 'クラリネット' },
  { name: 'バスクラリネット' },
  { name: 'Audio 01', audio: true },
  { name: 'フルート' },
  { name: 'テューバ' }
];

const icon = (id) => `<svg><use href="#${id}"/></svg>`;

const list = document.getElementById('tracks');
tracks.forEach((track, i) => {
  list.insertAdjacentHTML('beforeend', `
    <div class="track ${track.audio ? 'selected' : ''}">
      <div class="track-tag">${icon(track.audio ? 'wave' : 'keys')}<span>${i + 1}</span></div>
      <div class="track-main">
        <div class="track-row">
          <div class="pair ms"><button>M</button><button>S</button></div>
          <span class="label">${track.name}</span>
        </div>
        <div class="track-row">
          <div class="pair"><button class="${track.audio ? 'armed' : ''}">${icon('dot')}</button><button>${icon('speaker')}</button></div>
          <div class="pair"><button>${icon('edit')}</button><button>${icon(track.audio ? 'ring' : 'keys')}</button></div>
          <div class="pair"><button>R</button><button>W</button></div>
        </div>
      </div>
    </div>`);
});

// arrange ruler and grid, 16 steps per bar
const bars = document.getElementById('bars');
const lanes = document.getElementById('lanes');
const barWidth = 284.4;
for (let step = 0; step < 60; step++) {
  const x = Math.round(step * barWidth / 16) - 1;
  if (x > lanes.clientWidth) break;
  const kind = step % 16 === 0 ? 'bar' : step % 4 === 0 ? 'beat' : '';
  bars.insertAdjacentHTML('beforeend', `<i class="${kind}" style="left:${x}px"></i>`);
  lanes.insertAdjacentHTML('beforeend', `<i class="v ${kind}" style="left:${x}px"></i>`);
  if (kind === 'bar') {
    bars.insertAdjacentHTML('beforeend', `<span style="left:${x}px">${3 + step / 16}</span>`);
  }
}
for (let row = 0; row <= tracks.length; row++) {
  lanes.insertAdjacentHTML('beforeend', `<i class="h" style="top:${19 + row * 46}px"></i>`);
}

// sample editor ruler, one mark every 16 bars
const sampleBars = document.getElementById('sample-bars');
for (let n = 0; n * 66.4 < sampleBars.clientWidth - 40; n++) {
  const x = Math.round(n * 66.4);
  sampleBars.insertAdjacentHTML('beforeend', `<i class="bar" style="left:${x}px"></i><span style="left:${x}px">${1 + n * 16}</span>`);
}
```
